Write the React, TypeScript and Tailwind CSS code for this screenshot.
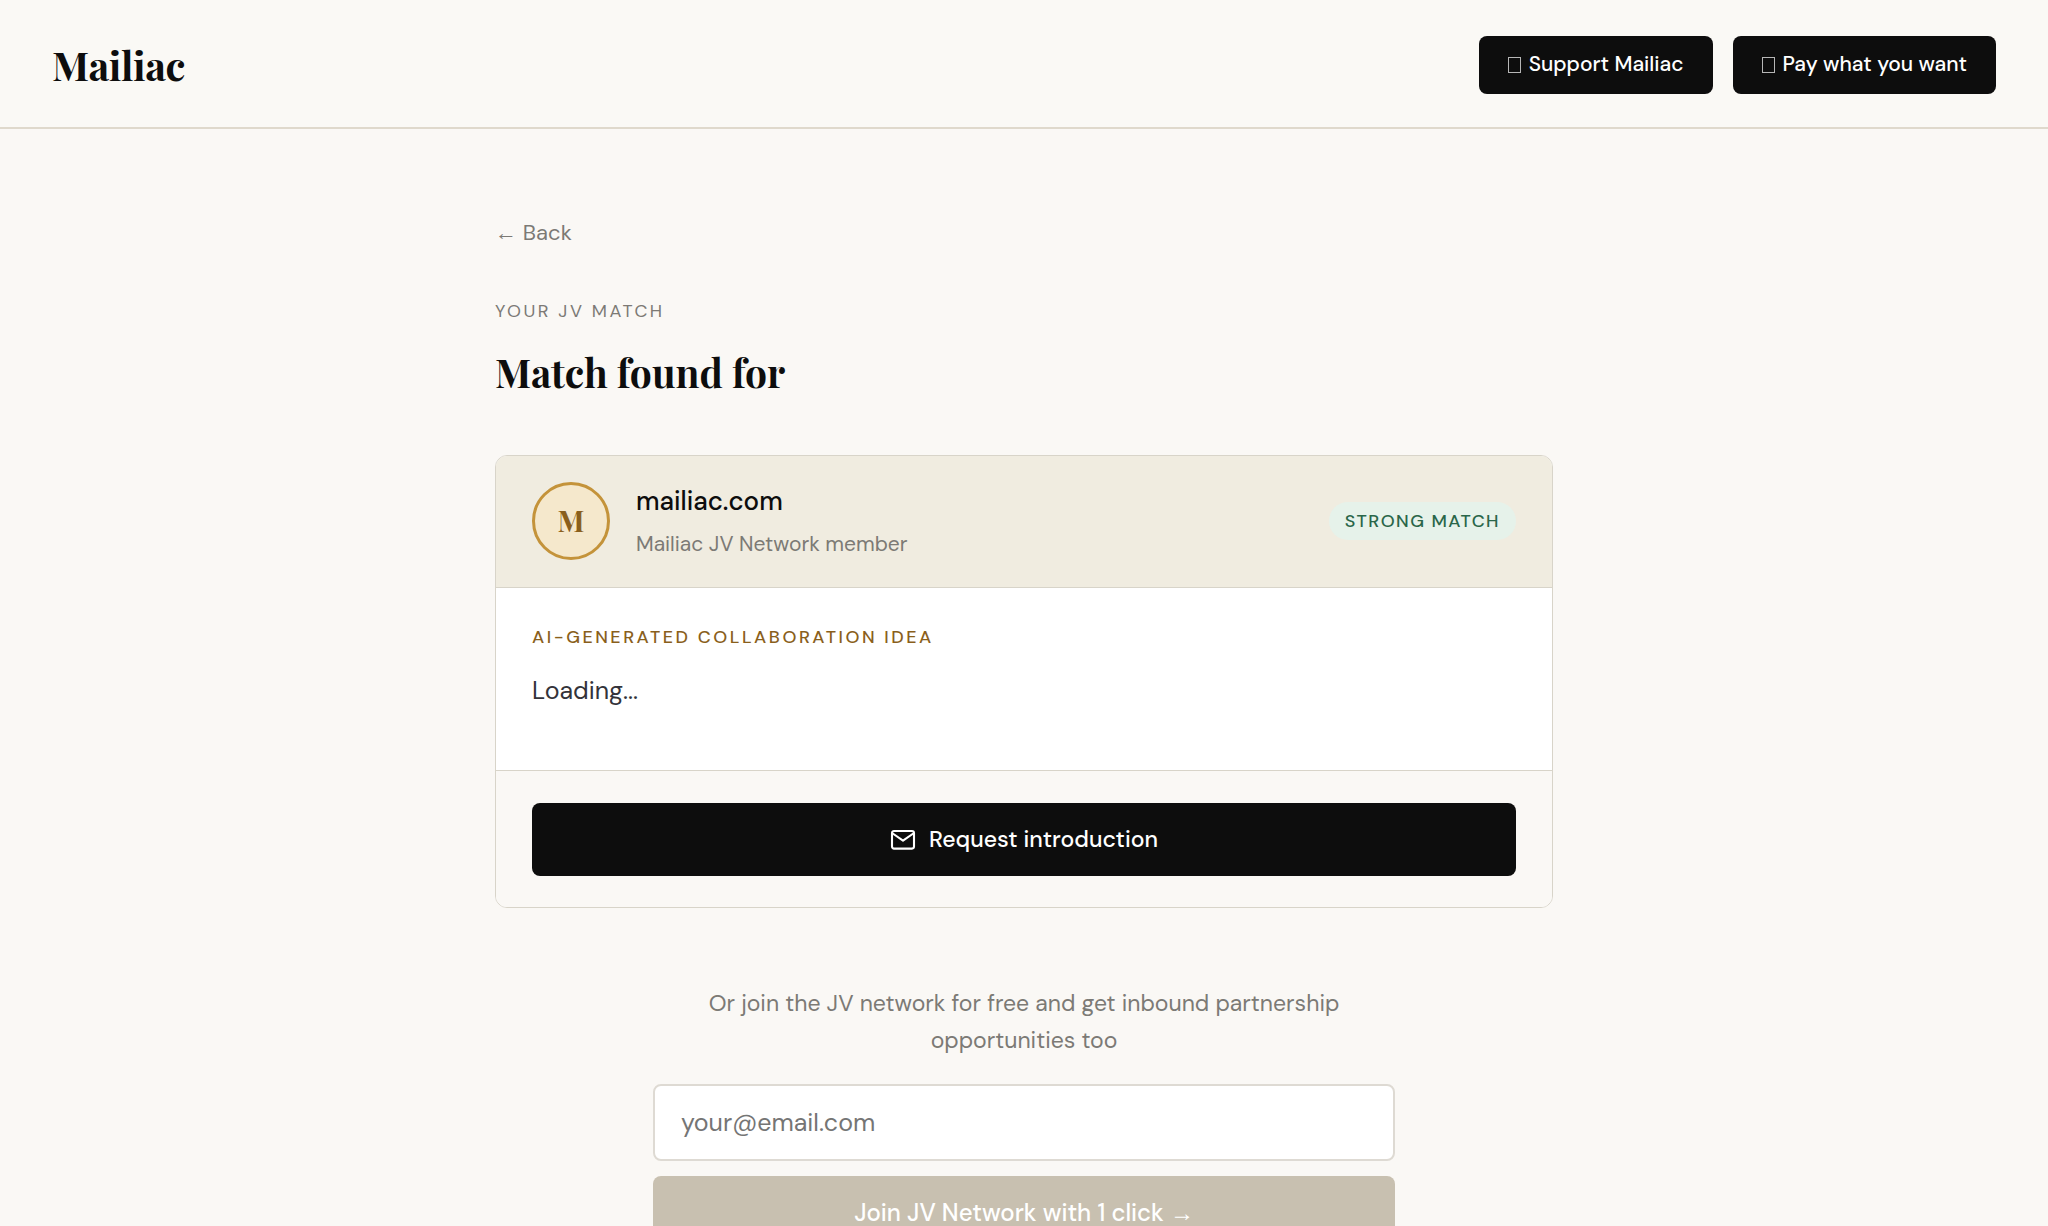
import { useState } from 'react';

const sans = "font-['DM_Sans','Inter','Liberation_Sans',sans-serif]";
const serif = "font-['Playfair_Display','Liberation_Serif',serif]";
const arrow = "font-['Liberation_Sans',sans-serif]";

const headerLinks = ['Support Mailiac', 'Pay what you want'];

const Header = () => {
  return (
    <header className="flex items-center justify-between border-b-2 border-[#dfd9cc] bg-[#faf9f5] px-[52px] pt-9 pb-[33px]">
      <a href="#" className={`${serif} text-[40px] leading-[56px] font-bold tracking-[-0.01em] text-[#0d0d0d]`}>
        Mailiac
      </a>
      <nav className="flex gap-5">
        {headerLinks.map((label) => (
          <a
            key={label}
            href="#"
            className="flex h-[58px] items-center gap-2 rounded-lg bg-[#0d0d0d] px-[29px] text-[21px] font-medium text-white"
          >
            <span aria-hidden="true" className="h-4 w-[13px] border border-white/70" />
            {label}
          </a>
        ))}
      </nav>
    </header>
  );
};

const MatchCard = () => {
  return (
    <article className="overflow-hidden rounded-xl border border-[#d8d4c9] bg-white">
      <div className="flex items-center gap-[26px] border-b border-[#d8d4c9] bg-[#f0ece0] px-9 pt-[26px] pb-[27px]">
        <div
          className={`${serif} flex size-[78px] items-center justify-center rounded-full border-3 border-[#c4933a] bg-[#f5e8cc] text-[29px] font-bold text-[#8a5f1c]`}
        >
          M
        </div>
        <div className="flex-1">
          <h2 className="text-[26px] leading-[38px] font-medium text-[#0d0d0d]">mailiac.com</h2>
          <p className="mt-2 text-[21px] leading-8 text-[#7c7a75]">Mailiac JV Network member</p>
        </div>
        <span className="rounded-full bg-[#e6f2ea] px-4 py-[5px] text-[18px] leading-7 font-medium tracking-[0.08em] text-[#2a6649]">
          STRONG MATCH
        </span>
      </div>
      <div className="border-b border-[#d8d4c9] px-9 pt-[35px] pb-[55px]">
        <h3 className="text-[18px] leading-7 font-medium tracking-[0.14em] text-[#8a5f1c]">
          AI-GENERATED COLLABORATION IDEA
        </h3>
        <p className="mt-4 text-[25px] leading-12 text-[#33333a]">Loading...</p>
      </div>
      <div className="bg-[#faf8f5] px-9 pt-8 pb-[31px]">
        <button
          type="button"
          className="flex h-[73px] w-full items-center justify-center gap-[13px] rounded-lg bg-[#0d0d0d] text-[23px] font-medium text-white"
        >
          <svg viewBox="0 0 26 26" className="size-[26px]" fill="none" stroke="currentColor" strokeWidth="2.1" strokeLinejoin="round">
            <rect x="2" y="4" width="22" height="17.6" rx="2" />
            <path d="M2 6l11 7.6L24 6" />
          </svg>
          Request introduction
        </button>
      </div>
    </article>
  );
};

const JoinForm = () => {
  const [email, setEmail] = useState('');

  return (
    <form className="mx-auto mt-[77px] flex max-w-[742px] flex-col" onSubmit={(e) => e.preventDefault()}>
      <label htmlFor="email" className="text-center text-[23px] leading-[37px] text-[#7c7a75]">
        Or join the JV network for free and get inbound partnership opportunities too
      </label>
      <input
        id="email"
        type="email"
        placeholder="your@email.com"
        value={email}
        onChange={(e) => setEmail(e.target.value)}
        className="mt-[25px] h-[77px] rounded-lg border-2 border-[#dedad3] bg-white px-[26px] text-[25px] text-[#0d0d0d] placeholder:text-[#757575]"
      />
      <button type="submit" className="mt-[15px] h-[73px] rounded-lg bg-[#c8c0b0] text-[24px] font-medium text-white">
        Join JV Network with 1 click <span className={arrow}>→</span>
      </button>
    </form>
  );
};

const App = () => {
  return (
    <div className={`${sans} min-h-screen bg-[#faf8f5]`}>
      <Header />
      <main className="mx-auto max-w-[1058px] pt-[84px] pb-20">
        <a href="#" className="inline-block text-[22px] leading-10 text-[#7c7a75]">
          <span className={arrow}>←</span> Back
        </a>
        <p className="mt-11 text-[18px] leading-7 tracking-[0.14em] text-[#7c7a75]">YOUR JV MATCH</p>
        <h1 className={`${serif} mt-[18px] mb-[54px] text-[39px] leading-[58px] font-bold text-[#0d0d0d]`}>
          Match found for
        </h1>
        <MatchCard />
        <JoinForm />
      </main>
    </div>
  );
};

export default App;
